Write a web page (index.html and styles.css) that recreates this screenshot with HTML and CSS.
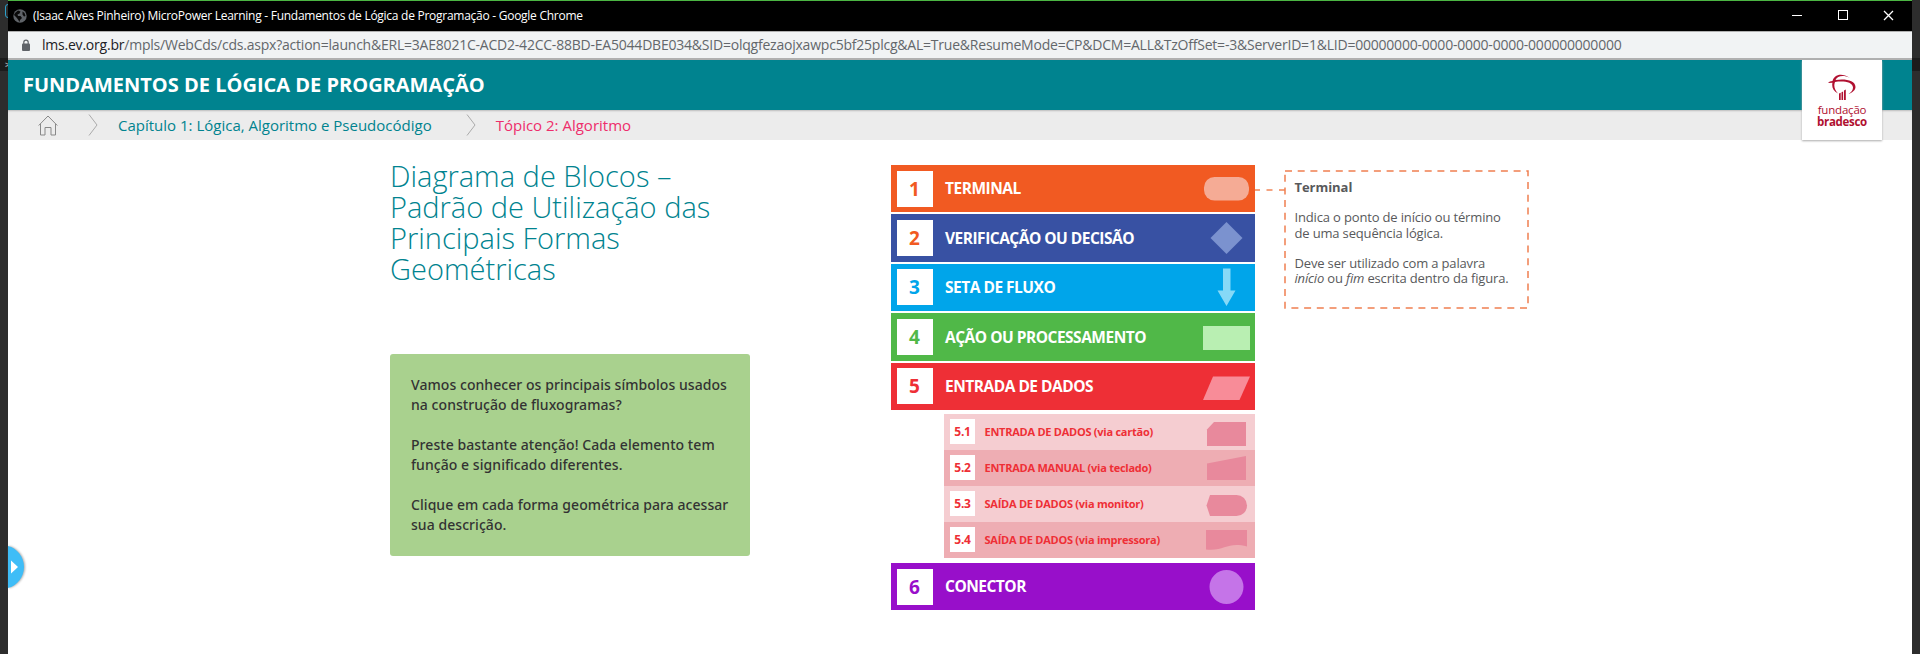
FILE: index.html
```
<!DOCTYPE html>
<html lang="pt-BR">
<head>
<meta charset="utf-8">
<title>MicroPower Learning</title>
<link rel="stylesheet" href="styles.css">
</head>
<body>
<div class="backdrop"><i class="frag"></i><i class="strip"></i><b class="mark">&gt;</b></div>
<div class="window">
  <div class="titlebar">
    <svg class="globe" width="14" height="14" viewBox="0 0 14 14"><circle cx="7" cy="7" r="6.7" fill="#5f6368"/><path d="M2 4l3-2.500 2.500 1-1 2-2 1 .5 1.500h2.500l1.500 2-2 2-.5 2-1.500-2.500L3.500 8.500 1 6zM9.500 2.500l2 1.500 1 3-1.500.5-1.500-2z" fill="#0a0a0a"/></svg>
    <span class="caption"><span class="t t-title">(Isaac Alves Pinheiro) MicroPower Learning - Fundamentos de Lógica de Programação - Google Chrome</span></span>
    <svg class="controls" width="138" height="30" viewBox="0 0 138 30" fill="none" stroke="#fff" shape-rendering="crispEdges"><path d="M18 14.500h10M64.500 9.500h9v9h-9z"/><path d="M110 10l9 9M119 10l-9 9" stroke-width="1.300" shape-rendering="auto"/></svg>
  </div>
  <div class="address">
    <svg class="lock" width="10" height="13" viewBox="0 0 10 13"><rect x="1" y="4.500" width="8" height="7.500" rx="1" fill="#5f6368"/><path d="M2.800 5V3.300a2.200 2.200 0 0 1 4.400 0V5" fill="none" stroke="#5f6368" stroke-width="1.200"/></svg>
    <span class="t t-url"><b>lms.ev.org.br</b>/mpls/WebCds/cds.aspx?action=launch&amp;ERL=3AE8021C-ACD2-42CC-88BD-EA5044DBE034&amp;SID=olqgfezaojxawpc5bf25plcg&amp;AL=True&amp;ResumeMode=CP&amp;DCM=ALL&amp;TzOffSet=-3&amp;ServerID=1&amp;LID=00000000-0000-0000-0000-000000000000</span>
  </div>
  <header class="header"><h1 class="t">FUNDAMENTOS DE LÓGICA DE PROGRAMAÇÃO</h1></header>
  <nav class="crumbs">
    <svg class="home" width="20" height="21" viewBox="0 0 20 21" fill="none" stroke="#888"><path d="M.7 10.500L10 1l9.300 9.500M2.500 9v11H7v-7.500h6V20h4.500V9"/></svg>
    <svg class="chev chev-a" width="10" height="22" viewBox="0 0 10 22" fill="none" stroke="#aaa"><path d="M1 .5L9 11 1 21.500"/></svg>
    <span class="t t-chapter">Capítulo 1: Lógica, Algoritmo e Pseudocódigo</span>
    <svg class="chev chev-b" width="10" height="22" viewBox="0 0 10 22" fill="none" stroke="#aaa"><path d="M1 .5L9 11 1 21.500"/></svg>
    <span class="t t-topic">Tópico 2: Algoritmo</span>
  </nav>
  <div class="logo">
    <svg width="30" height="28" viewBox="0 0 30 28" fill="#b01030"><path d="M5.500 8C7 2 14-1 23 5 16 1.500 10.500 3 8.500 7c9-1.500 20 0 20 7 0 3-3 5.500-7 7 3-2 4.500-4 4.500-6.500C25.500 9 17 7.800 8 9c-1.500 4-.5 8 3 11.500C6 18 4.500 13.500 5.500 9.700L1 10C2 8.800 3.500 8.200 5.500 8zM12 20.500l1.700-.8V27H12zM14.500 19.300l1.600-.8V27h-1.600zM17 17.500l1.800-1V27H17z"/></svg>
    <span class="t t-fund">fundação</span>
    <span class="t t-brad">bradesco</span>
  </div>
  <button class="drawer" aria-label="Menu"><svg width="17" height="42" viewBox="0 0 17 42"><path d="M0 0C9 2 16 11 16 21S9 40 0 42z" fill="#3fbdf7"/><path d="M3 14.500L10 21 3 27.500z" fill="#fff"/></svg></button>
  <main class="content">
    <section class="intro">
      <h2>Diagrama de Blocos –<br>Padrão de Utilização das<br>Principais Formas<br>Geométricas</h2>
      <div class="note">
        <p>Vamos conhecer os principais símbolos usados<br>na construção de fluxogramas?</p>
        <p>Preste bastante atenção! Cada elemento tem<br>função e significado diferentes.</p>
        <p>Clique em cada forma geométrica para acessar<br>sua descrição.</p>
      </div>
    </section>
    <section class="list">
      <div class="row orange"><span class="num">1</span><span class="label">TERMINAL</span><svg width="50" height="40" viewBox="0 0 50 40"><rect x="2" y="8" width="45" height="23.500" rx="10.500" fill="#f5ab95"/></svg></div>
      <div class="row blue"><span class="num">2</span><span class="label">VERIFICAÇÃO OU DECISÃO</span><svg width="50" height="40" viewBox="0 0 50 40"><path d="M24.500 4l16 16-16 16-16-16z" fill="#7b92cf"/></svg></div>
      <div class="row cyan"><span class="num">3</span><span class="label">SETA DE FLUXO</span><svg width="50" height="40" viewBox="0 0 50 40"><path d="M21 1.500h7.500v22h5L24.500 39l-9-15.500H21z" fill="#86d9f7"/></svg></div>
      <div class="row green"><span class="num">4</span><span class="label">AÇÃO OU PROCESSAMENTO</span><svg width="50" height="40" viewBox="0 0 50 40"><path d="M1 9h47v24H1z" fill="#b9efb2"/></svg></div>
      <div class="row red"><span class="num">5</span><span class="label">ENTRADA DE DADOS</span><svg width="50" height="40" viewBox="0 0 50 40"><path d="M11 10.500h37L37.500 34H1z" fill="#f88c98"/></svg></div>
      <div class="sublist">
        <div class="sub"><span class="num">5.1</span><span class="label">ENTRADA DE DADOS (via cartão)</span><svg width="44" height="36" viewBox="0 0 44 36"><path d="M2 15.500L9 8h32v24H2z"/></svg></div>
        <div class="sub dark"><span class="num">5.2</span><span class="label">ENTRADA MANUAL (via teclado)</span><svg width="44" height="36" viewBox="0 0 44 36"><path d="M2 13.500L41 6v24H2z"/></svg></div>
        <div class="sub"><span class="num">5.3</span><span class="label">SAÍDA DE DADOS (via monitor)</span><svg width="44" height="36" viewBox="0 0 44 36"><path d="M5 9h26.500a10.500 10.500 0 0 1 0 21H5L1.500 19.500z"/></svg></div>
        <div class="sub dark"><span class="num">5.4</span><span class="label">SAÍDA DE DADOS (via impressora)</span><svg width="44" height="36" viewBox="0 0 44 36"><path d="M1 8h41v16.500c-20-5-22 5-41 3z"/></svg></div>
      </div>
      <div class="row purple"><span class="num">6</span><span class="label">CONECTOR</span><svg width="50" height="40" viewBox="0 0 50 40"><circle cx="24.500" cy="20" r="17" fill="#c574e8"/></svg></div>
    </section>
    <svg class="link" width="30" height="2" viewBox="0 0 30 2"><path d="M0 1h30" stroke="#f18658" stroke-width="1.300" stroke-dasharray="6 6.500" stroke-dashoffset="1"/></svg>
    <aside class="callout">
      <svg class="dash" width="245" height="139" viewBox="0 0 245 139" fill="none" stroke="#f07f50" stroke-width="1.500"><path d="M1 1h243v137H1z" stroke-dasharray="7 5.700"/></svg>
      <p><strong>Terminal</strong></p>
      <p>Indica o ponto de início ou término<br>de uma sequência lógica.</p>
      <p>Deve ser utilizado com a palavra<br><em>início</em> ou <em>fim</em> escrita dentro da figura.</p>
    </aside>
  </main>
</div>
</body>
</html>
```
FILE: styles.css
```
* { box-sizing: border-box; }
body { margin: 0; width: 1920px; height: 654px; overflow: hidden; background: #2d2d2d; font-family: "Open Sans", sans-serif; position: relative; }
h1, h2, p { margin: 0; }
.backdrop { position: absolute; left: 0; top: 0; width: 1920px; height: 654px; overflow: hidden; }
.frag { position: absolute; left: 5px; top: 4px; width: 9px; height: 14px; border: 1px solid #2b9fc9; border-radius: 3px; }
.strip { position: absolute; left: 0; top: 58px; width: 1920px; height: 13px; background: #1c1c1c; }
.mark { position: absolute; left: 5px; top: 58px; font-size: 9px; color: #aaa; }
.window { position: relative; width: 1904px; height: 654px; margin-left: 8px; background: #fff; border-top: 1px solid #4bb543; }
.t { white-space: nowrap; display: block; }
.titlebar { height: 30px; background: #000; color: #fff; display: flex; align-items: center; padding-left: 5px; }
.caption { flex: 1; padding-left: 6px; }
.t-title { font-size: 12px; line-height: 30px; letter-spacing: -0.265px; }
.address { height: 29px; background: #f1f3f4; border-top: 1px solid #b0b0b0; border-bottom: 2px solid #b0b0b0; display: flex; align-items: center; padding-left: 13px; color: #63676b; }
.lock { margin-right: 11px; }
.t-url { font-size: 14px; line-height: 26px; letter-spacing: -0.218px; }
.t-url b { font-weight: 400; color: #202124; }
.header { height: 50px; background: #00838f; padding-left: 15px; color: #fff; }
.header h1 { font-size: 20px; line-height: 50px; font-weight: 700; }
.crumbs { height: 30px; background: #ececec; box-shadow: inset 0 2px 2px -1px #bbb; display: flex; align-items: center; font-size: 15px; color: #00838f; }
.home { margin-left: 30px; }
.chev-a { margin: 0 20px 0 30px; }
.chev-b { margin: 0 20px 0 34px; }
.t-topic { color: #ee2e6b; }
.logo { position: absolute; left: 1794px; top: 59px; width: 80px; height: 80px; background: #fff; box-shadow: 0 1px 2px #aaa; color: #b01030; display: flex; flex-direction: column; align-items: center; padding-top: 13px; }
.t-fund { font-size: 11.500px; line-height: 12px; margin-top: 3px; letter-spacing: -0.2px; }
.t-brad { font-size: 11.500px; line-height: 12px; font-weight: 700; letter-spacing: -0.3px; }
.drawer { position: absolute; left: 0; top: 545px; width: 17px; height: 42px; border: 0; padding: 0; background: none; filter: drop-shadow(1px 0 1px #aaa); }
.drawer svg { display: block; }
.content { display: flex; align-items: flex-start; padding: 25px 0 0 382px; }
.intro { width: 360px; }
.intro h2 { font-size: 29px; line-height: 31px; font-weight: 300; color: #00838f; white-space: nowrap; margin-top: -5px; }
.note { margin-top: 70px; height: 202px; background: #a9d18e; border-radius: 3px; padding: 21px; color: #333; font-family: "Noto Sans", sans-serif; font-size: 14px; line-height: 20px; font-weight: 500; letter-spacing: 0.06px; white-space: nowrap; }
.note p { margin-bottom: 20px; }
.list { width: 364px; margin-left: 141px; display: flex; flex-direction: column; }
.row { height: 47.400px; margin-bottom: 2px; display: flex; align-items: center; padding: 0 3px 0 6px; color: #fff; font-weight: 700; }
.row .num { width: 36px; height: 36px; line-height: 36px; padding-right: 1px; background: #fff; text-align: center; font-size: 19px; font-weight: 700; }
.row .label { flex: 1; padding-left: 12px; font-size: 15.500px; letter-spacing: -0.5px; white-space: nowrap; }
.orange { background: #f15a22; }
.orange .num, .blue .num { color: #f15a22; }
.orange .label { padding-bottom: 1px; }
.blue { background: #3851a3; }
.cyan { background: #00a5ea; }
.cyan .num { color: #00a5ea; }
.green { background: #50b848; }
.green .num { color: #50b848; }
.red { background: #ee2f36; }
.red .num { color: #ee2f36; }
.purple { background: #980fca; margin: 0; }
.purple .num { color: #980fca; }
.purple .label { padding-bottom: 1px; }
.sublist { margin: 2px 0 5px 53px; }
.sub { height: 36px; background: #f5cdd1; display: flex; align-items: center; padding: 0 6px; color: #ee2f36; font-weight: 700; }
.sub.dark { background: #eeadb3; }
.sub .num { width: 25px; height: 25px; background: #fff; text-align: center; font-size: 12px; font-weight: 700; line-height: 25px; letter-spacing: -0.2px; }
.sub .label { flex: 1; padding-left: 9.500px; font-size: 11px; letter-spacing: -0.25px; white-space: nowrap; }
.sub svg { fill: #e8899c; }
.link { margin-top: 24px; }
.callout { position: relative; width: 245px; height: 139px; margin: 5px 0 0 -1px; padding: 10px 0 0 10.500px; color: #58595b; font-size: 13px; line-height: 15.500px; letter-spacing: -0.16px; white-space: nowrap; }
.callout p { margin-bottom: 14.500px; }
.callout strong { letter-spacing: -0.05px; }
.dash { position: absolute; left: 0; top: 0; }
```
